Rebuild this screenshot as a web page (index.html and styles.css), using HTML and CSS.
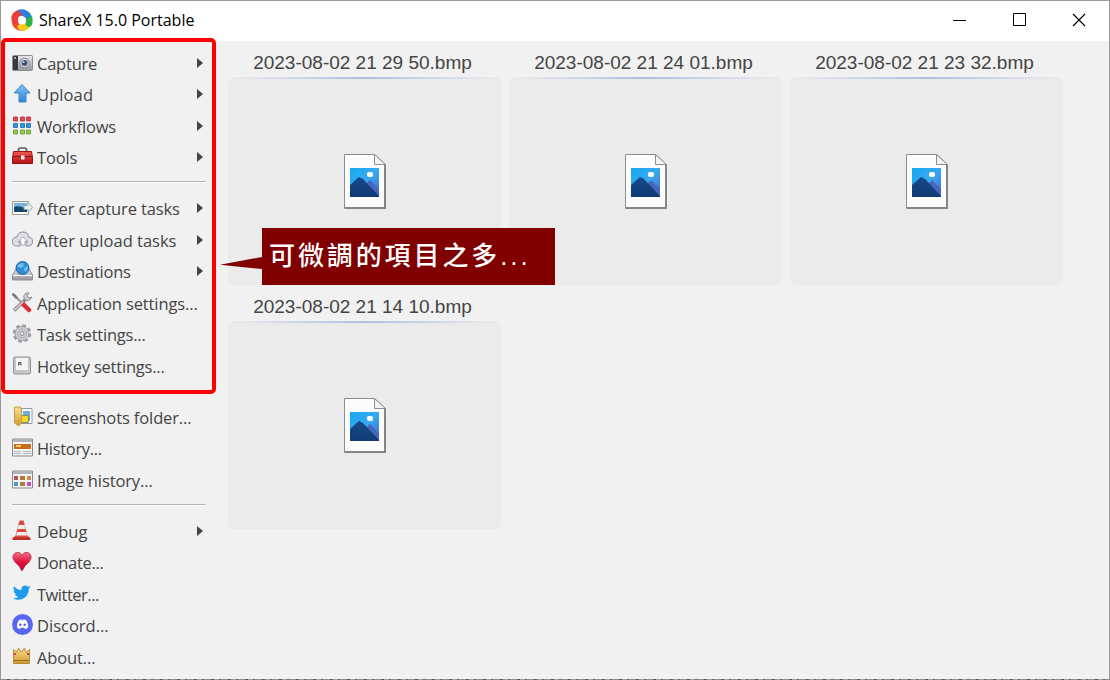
FILE: index.html
```html
<!DOCTYPE html>
<html lang="zh-Hant">
<head>
<meta charset="utf-8">
<title>ShareX 15.0 Portable</title>
<link rel="stylesheet" href="styles.css">
</head>
<body>
<svg class="defs" width="0" height="0" aria-hidden="true">
  <defs>
    <linearGradient id="steel" x2="0" y2="1"><stop stop-color="#e9e9ed"/><stop offset="1" stop-color="#92929a"/></linearGradient>
    <linearGradient id="arrowblue" x2="0" y2="1"><stop stop-color="#7cc4f8"/><stop offset="1" stop-color="#2c86d6"/></linearGradient>
    <linearGradient id="red" x2="0" y2="1"><stop stop-color="#ef5a50"/><stop offset="1" stop-color="#b80f12"/></linearGradient>
    <linearGradient id="gold" x2="0" y2="1"><stop stop-color="#fbe28d"/><stop offset="1" stop-color="#cf9a30"/></linearGradient>
    <linearGradient id="heart" x2="0" y2="1"><stop stop-color="#f0718a"/><stop offset=".5" stop-color="#e3163c"/><stop offset="1" stop-color="#a80d2c"/></linearGradient>
    <linearGradient id="sky" x2="1" y2="1"><stop stop-color="#18a8f0"/><stop offset=".5" stop-color="#36a9f0"/><stop offset="1" stop-color="#4b66cc"/></linearGradient>
    <linearGradient id="hill" x2="0" y2="1"><stop stop-color="#184a87"/><stop offset="1" stop-color="#103a78"/></linearGradient>
    <symbol id="doc" viewBox="0 0 42 55">
      <path d="M.5.5h30l11 10v44H.5z" fill="#fcfcfc" stroke="#8d8d8d"/>
      <path d="M41 11v43.500M1 54h41" stroke="#858585" stroke-width="2"/>
      <path d="M30.500.5v10h11z" fill="#f3f3f3" stroke="#8d8d8d"/>
      <path d="M6 14h29v29H6z" fill="url(#sky)"/>
      <path d="M20 32l6-6 9 9v8H20z" fill="#4866bd"/>
      <path d="M6 31l9-8 4 2 16 17v1H6z" fill="url(#hill)"/>
      <rect x="23" y="18" width="6" height="5" rx="2" fill="#fff"/>
    </symbol>
  </defs>
</svg>
<div class="window">
  <header class="titlebar">
    <svg class="logo" viewBox="0 0 22 22"><g fill="none" stroke-width="6.500" stroke-linecap="round"><path d="M4.500 15Q7 19 12 18.500" stroke="#f0512f"/><path d="M10 18Q15 19 17.500 15" stroke="#f8cc1a"/><path d="M18 14.500Q19.500 9 15.500 5.500" stroke="#2bb34a"/><path d="M8.500 4Q12 2.500 16 6" stroke="#2a7fe2"/><path d="M4 12Q2.500 6 8 4" stroke="#ee3e38"/></g><path d="M8 3.500Q13-.5 17 6" fill="none" stroke="#2a7fe2" stroke-width="3"/><circle cx="11" cy="11.500" r="4" fill="#fff"/></svg>
    <h1 class="caption"><span>ShareX 15.0 Portable</span></h1>
    <div class="controls">
      <svg viewBox="0 0 14 14"><path d="M0 7.500h13" stroke="#000"/></svg>
      <svg viewBox="0 0 14 14"><path d="M.5.5h12v12H.5z" fill="none" stroke="#000"/></svg>
      <svg viewBox="0 0 14 14"><path d="M1 1l12 12M13 1L1 13" stroke="#000" stroke-width="1.200"/></svg>
    </div>
  </header>
  <div class="body">
    <nav class="menu">
      <div class="item sub"><svg viewBox="0 0 21 21"><rect x=".5" y="3.500" width="20" height="15" rx="1" fill="url(#steel)" stroke="#8d8d94"/><path d="M1 4h5v14H1z" fill="#393940"/><path d="M2 5h2v2H2z" fill="#aaa"/><circle cx="12.500" cy="11" r="4.700" fill="#ddd" stroke="#85858d"/><circle cx="12.500" cy="11" r="3" fill="#425478"/><circle cx="11.500" cy="10" r="1" fill="#b9d7f4"/></svg><span class="label tight">Capture</span></div>
      <div class="item sub"><svg viewBox="0 0 21 21"><path d="M10 1.500L18 10h-4v9h-7v-9H2z" fill="url(#arrowblue)" stroke="#4388bf"/></svg><span class="label wide">Upload</span></div>
      <div class="item sub"><svg viewBox="0 0 21 21"><g stroke-width=".8"><path d="M1.500 2h4v4h-4zM8.500 2h4v4h-4zM14.500 2h4v4h-4z" fill="#e84b4b" stroke="#a92b30"/><path d="M1.500 8.500h4v4h-4zM8.500 8.500h4v4h-4zM14.500 8.500h4v4h-4z" fill="#3197e5" stroke="#2169a8"/><path d="M1.500 15h4v4h-4zM8.500 15h4v4h-4zM14.500 15h4v4h-4z" fill="#91d249" stroke="#5d962c"/></g></svg><span class="label tight">Workflows</span></div>
      <div class="item sub"><svg viewBox="0 0 21 21"><path d="M6.500 6V4q0-2 2-2h4q2 0 2 2v2" fill="none" stroke="#5c5c5c" stroke-width="1.700"/><path d="M1.500 5.500h18l1 6v6H.5v-6z" fill="url(#red)" stroke="#921316"/><path d="M1 10.500h19" stroke="#8f1113"/><path d="M9 9.500h3.500v4H9z" fill="#eee"/></svg><span class="label snug">Tools</span></div>
      <hr>
      <div class="item sub"><svg viewBox="0 0 21 21"><path d="M.5 4.500h16v13H.5z" fill="#fafafa" stroke="#999"/><path d="M2 6h13v9H2z" fill="#75b4e2"/><path d="M2 10q5-2 13 2v3H2z" fill="#17466f"/><path d="M12 8.500h4v-3l4.500 5-4.500 5v-3h-4z" fill="#eee" stroke="#8aa"/></svg><span class="label snug">After capture tasks</span></div>
      <div class="item sub"><svg viewBox="0 0 21 21"><path d="M5 17Q.5 17 .5 12.500T5 8q1-5 6-5t5.500 5q4 0 4 4.500T16 17h-2v-4h2l-5-5-5 5h2v4z" fill="#dedee8" stroke="#8e8e9c"/><path d="M11 8l4 4h-2v4H9v-4H7z" fill="#fff" stroke="#aaaab4"/></svg><span class="label">After upload tasks</span></div>
      <div class="item sub"><svg viewBox="0 0 21 21"><path d="M4 9h13l3.500 6v5H.5v-5z" fill="url(#steel)" stroke="#909096"/><path d="M1 15.500h19" stroke="#fff"/><circle cx="10.500" cy="8" r="6.500" fill="#2f8dd8" stroke="#1b65a8"/><path d="M5 7q2-4 6-4l1 3-3 2zM12 8l4-2q0 5-3 6z" fill="#70bff0"/></svg><span class="label tight">Destinations</span></div>
      <div class="item"><svg viewBox="0 0 21 21"><path d="M2 18.500L14 7" stroke="#888" stroke-width="3.500"/><path d="M14 1q-4 3-1 7 4 2 7-3l-3 1-2-2 2-3z" fill="#ccc" stroke="#8c8c8c"/><path d="M3 4l8 8" stroke="#999" stroke-width="2"/><path d="M0 1l3 1 3 4-2 1-4-4z" fill="#777"/><path d="M11 12l6 6" stroke="#d92e35" stroke-width="4.500" stroke-linecap="round"/><path d="M2.500 18l9-8.500" stroke="#d7d7d7" stroke-width="1.400"/></svg><span class="label snug">Application settings...</span></div>
      <div class="item"><svg viewBox="0 0 21 21"><circle cx="10" cy="10.500" r="8" fill="none" stroke="#9a9aa0" stroke-width="2.500" stroke-dasharray="3.700 2.583"/><circle cx="10" cy="10.500" r="7" fill="#d2d2d6" stroke="#9c9ca2"/><circle cx="10" cy="10.500" r="4.500" fill="none" stroke="#a6a6ab"/><circle cx="10" cy="10.500" r="2" fill="#f1f1f1" stroke="#88888e"/></svg><span class="label tight">Task settings...</span></div>
      <div class="item"><svg viewBox="0 0 21 21"><rect x="1.500" y="2" width="17" height="17" rx="1.500" fill="#c6c6c9" stroke="#949497"/><rect x="4" y="3" width="12" height="12" rx="1" fill="#f5f5f5"/><path d="M6.500 10.500V7.500h2.500V10.500M6.500 9h2.500" fill="none" stroke="#555"/></svg><span class="label tight">Hotkey settings...</span></div>
      <hr>
      <div class="item"><svg viewBox="0 0 21 21"><path d="M8 2.500h12v15H8z" fill="#fff" stroke="#8e9eae"/><path d="M11 5h7v10h-7z" fill="#6faddd"/><path d="M9.500 9.500h7v7h-7z" fill="#f5d923" stroke="#8b8c64"/><path d="M2.500 1h6l1 3v13l-3 3-4-3z" fill="url(#gold)" stroke="#c89d45"/></svg><span class="label snug">Screenshots folder...</span></div>
      <div class="item"><svg viewBox="0 0 21 21"><path d="M.5 2h20v17H.5z" fill="#f4f4f4" stroke="#888890"/><path d="M1 2h19v3H1z" fill="#b2b2ba"/><path d="M2 7h17v5H2z" fill="#c96d16"/><path d="M4 9h5" stroke="#f7c873" stroke-width="2"/><path d="M2 14.500h7M2 16.500h7M11 14.500h8M11 16.500h8" stroke="#b6b6ba"/></svg><span class="label tighter">History...</span></div>
      <div class="item"><svg viewBox="0 0 21 21"><path d="M.5 2h20v17H.5z" fill="#f4f4f4" stroke="#888890"/><path d="M1 2h19v3H1z" fill="#b2b2ba"/><path d="M2 7h4v4H2z" fill="#ba5055"/><path d="M8 7h5v4H8zM8 13h5v4H8z" fill="#b27a3c"/><path d="M15 7h4v4h-4z" fill="#c98c42"/><path d="M2 13h4v4H2z" fill="#42a0b6"/><path d="M15 13h4v4h-4z" fill="#cf48bd"/></svg><span class="label snug">Image history...</span></div>
      <hr>
      <div class="item sub"><svg viewBox="0 0 21 21"><path d="M.5 18l3-2h12l3 2v2H.5z" fill="#bb3029"/><path d="M7.500.5h4l4.500 17H3z" fill="#df493b"/><path d="M6.500 5h6l1 4h-8zM5 12h9.300l.9 3.500H4z" fill="#eee"/></svg><span class="label">Debug</span></div>
      <div class="item"><svg viewBox="0 0 21 21"><path d="M10 20Q8 15 3 11-1 6 2.500 2.500 7-.5 10 4q3-4.500 7.500-1.500Q21 6 17 11q-5 4-7 9z" fill="url(#heart)" stroke="#b92546" stroke-width=".8"/></svg><span class="label tighter">Donate...</span></div>
      <div class="item"><svg viewBox="0 0 24 24"><path transform="translate(1 1) scale(.84)" d="M23.950 4.570a10 10 0 0 1-2.820.77 4.960 4.960 0 0 0 2.160-2.720c-.95.550-2 .950-3.120 1.180a4.920 4.920 0 0 0-8.380 4.480C7.690 8.100 4.070 6.130 1.640 3.160a4.920 4.920 0 0 0 1.520 6.570 4.900 4.900 0 0 1-2.230-.61v.06a4.920 4.920 0 0 0 3.950 4.820 5 5 0 0 1-2.210.08 4.940 4.940 0 0 0 4.600 3.420A9.870 9.870 0 0 1 0 19.540a14 14 0 0 0 7.550 2.210c9.050 0 14-7.500 14-13.980v-.64a10 10 0 0 0 2.400-2.560z" fill="#1d9bef"/></svg><span class="label tightest">Twitter...</span></div>
      <div class="item"><svg viewBox="0 0 21 21"><circle cx="10.500" cy="10.500" r="10.500" fill="#5865f2"/><path d="M6.500 6.500q1.500-1 3-1.200l.3 1h1.400l.3-1q1.500.2 3 1.200 2 3.500 1.500 7-1.500 1.500-3 1.500l-.8-1.200H8.800L8 15q-1.500 0-3-1.500-.5-3.500 1.500-7z" fill="#fff"/><circle cx="8.300" cy="10.800" r="1.300" fill="#5865f2"/><circle cx="12.700" cy="10.800" r="1.300" fill="#5865f2"/></svg><span class="label">Discord...</span></div>
      <div class="item"><svg viewBox="0 0 21 21"><path d="M1.500 17.500V3.500l3.500 3L6.500 2l3 4 3-4 1.500 4.500 3.500-3v14z" fill="url(#gold)" stroke="#b58b37"/><path d="M2 14.500h15" stroke="#966d25"/><path d="M2 8h2M15 8h2" stroke="#dc3939" stroke-width="2"/></svg><span class="label snug">About...</span></div>
    </nav>
    <main class="gallery">
      <figure class="thumb"><figcaption>2023-08-02 21 29 50.bmp</figcaption><div class="preview"><svg><use href="#doc"/></svg></div></figure>
      <figure class="thumb"><figcaption>2023-08-02 21 24 01.bmp</figcaption><div class="preview"><svg><use href="#doc"/></svg></div></figure>
      <figure class="thumb"><figcaption>2023-08-02 21 23 32.bmp</figcaption><div class="preview"><svg><use href="#doc"/></svg></div></figure>
      <figure class="thumb"><figcaption>2023-08-02 21 14 10.bmp</figcaption><div class="preview"><svg><use href="#doc"/></svg></div></figure>
    </main>
  </div>
</div>
<div class="highlight"></div>
<div class="callout">可微調的項目之多...</div>
</body>
</html>
```
FILE: styles.css
```css
* { box-sizing: border-box; }
body { margin: 0; width: 1110px; height: 680px; overflow: hidden; position: relative; background: repeating-linear-gradient(90deg, #8c8c8c 0 7px, #555 7px 10px, #9c9c9c 10px 15px, #666 15px 17px); }
.defs { position: absolute; }
.window { width: 1110px; height: 679px; display: flex; flex-direction: column; background: #f1f1f1; border: 1px solid #999; border-bottom: 0; }
.titlebar { height: 40px; display: flex; align-items: center; background: #fff; padding: 0 23px 2px 10px; }
.logo { width: 22px; height: 22px; margin-right: 6px; }
.caption { margin: 0; font: 400 16px/24px "Open Sans", "Noto Sans", sans-serif; color: #000; flex: 1; white-space: nowrap; }
.controls { display: flex; gap: 45.500px; }
.controls svg { width: 14px; height: 14px; }
.body { flex: 1; display: flex; min-height: 0; }
.menu { width: 216px; padding: 6.500px 11px 0 11px; }
.item { height: 31.500px; display: flex; align-items: center; color: #444; font: 400 16.500px/24px "Open Sans", "Noto Sans", sans-serif; }
.item svg { width: 21px; height: 21px; margin: -2px 4px 0 0; flex: none; }
.label { white-space: nowrap; padding-top: 1px; }
.wide { letter-spacing: .1px; }
.snug { letter-spacing: -.12px; }
.tight { letter-spacing: -.22px; }
.tighter { letter-spacing: -.32px; }
.tightest { letter-spacing: -.5px; }
.sub::after { content: ""; margin: -1px 3px 0 auto; border: solid transparent; border-width: 5px 0 5px 6px; border-left-color: #444; }
.menu hr { margin: 7.500px 0 10px; border: 0; height: 2px; border-top: 1px solid #b4b4b4; background: #fff; }
.gallery { flex: 1; display: grid; grid-template-columns: repeat(3, 273px); grid-auto-rows: 244px; column-gap: 8px; padding-left: 11px; align-content: start; }
.thumb { margin: 0; display: flex; flex-direction: column; }
.thumb figcaption { height: 36px; padding: 10px 4px 0 0; text-align: center; color: #444; font: 19px/24px "Liberation Sans", Arial, sans-serif; white-space: nowrap; }
.preview { position: relative; height: 208px; border-radius: 6px; background: #ebebeb; display: flex; align-items: center; justify-content: center; }
.preview::before { content: ""; position: absolute; top: 0; left: 3px; right: 3px; height: 1.500px; background: linear-gradient(90deg, transparent, #b0bfe0 50%, transparent); }
.preview svg { width: 42px; height: 55px; }
.highlight { position: absolute; left: 1px; top: 38px; width: 215px; height: 356px; border: 4.500px solid #f00; border-radius: 5px; }
.callout { position: absolute; left: 262px; top: 228px; width: 293px; height: 57px; padding-left: 7px; background: #800000; color: #fff; font: 500 26px/57px "Liberation Sans", "Noto Sans CJK TC", sans-serif; letter-spacing: 2.900px; white-space: nowrap; }
.callout::before { content: ""; position: absolute; left: -42px; top: 29px; width: 42px; height: 12px; background: #800000; clip-path: polygon(0 65%, 100% 0, 100% 100%); }
```
